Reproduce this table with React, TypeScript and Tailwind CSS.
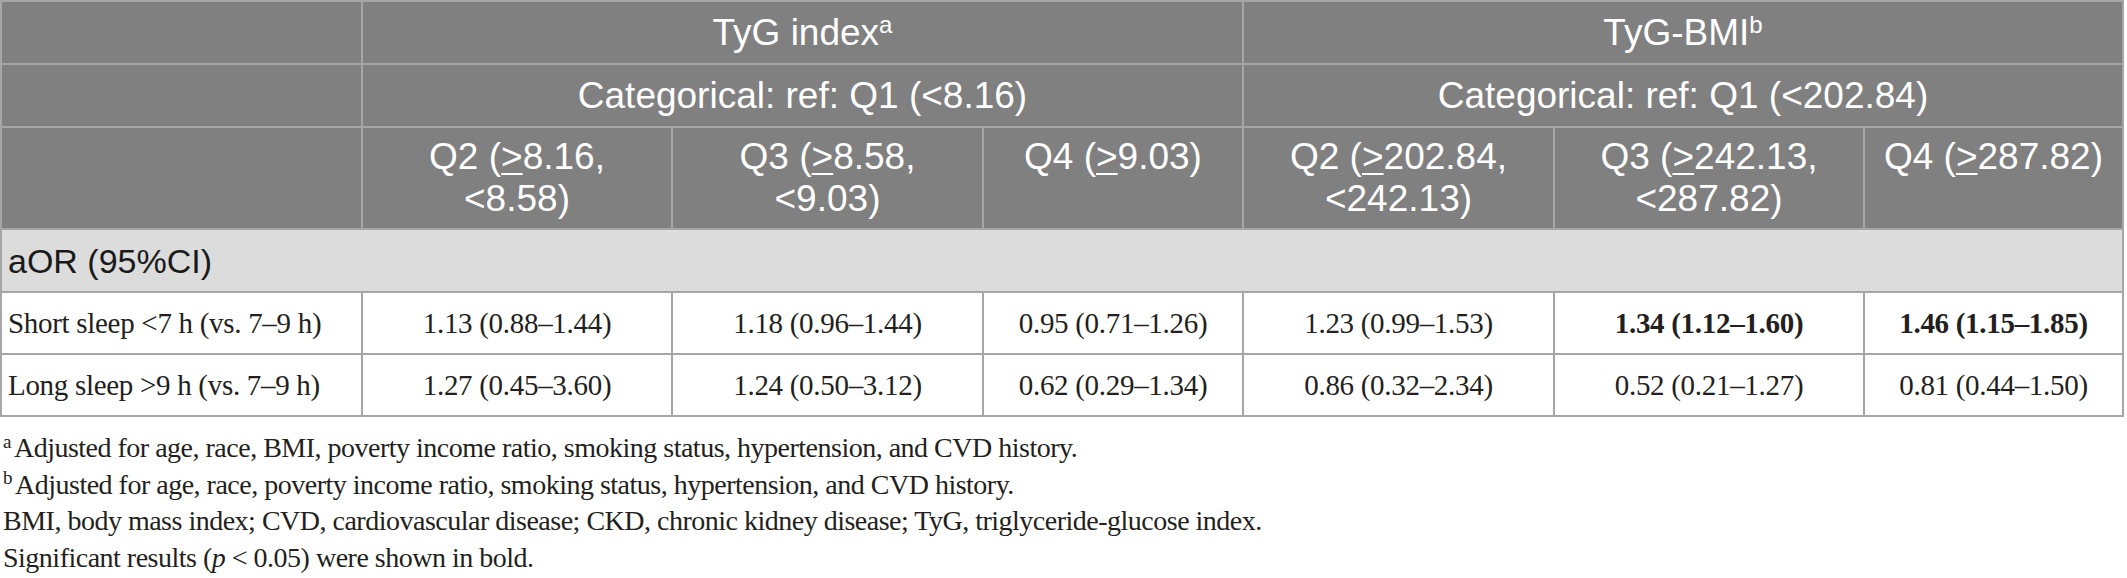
import React from "react";

const GE = () => (
  <span className="underline decoration-[2px] underline-offset-[4px]">&gt;</span>
);

function HeadCell({
  children,
  className = "",
}: {
  children?: React.ReactNode;
  className?: string;
}) {
  return (
    <div
      className={
        "bg-[#808080] text-white font-['Liberation_Sans',Arial,sans-serif] text-[37px] leading-[42px] text-center " +
        className
      }
    >
      {children}
    </div>
  );
}

function DataCell({
  children,
  left = false,
  bold = false,
}: {
  children?: React.ReactNode;
  left?: boolean;
  bold?: boolean;
}) {
  return (
    <div
      className={
        (left ? "justify-start pl-[6px] " : "justify-center ") +
        (bold ? "font-bold " : "font-normal ") +
        "flex items-center bg-white font-['Liberation_Serif',serif] text-[29px] tracking-[-0.3px] leading-[34px] text-[#231f20]"
      }
    >
      {children}
    </div>
  );
}

export default function App() {
  return (
    <div className="w-[2127px] h-[578px] bg-white overflow-hidden">
      <div className="grid w-[2124px] grid-cols-[359px_308px_309px_258px_309px_308px_257px] grid-rows-[61px_61px_100px_61px_60px_60px] gap-[2px] border-2 border-[#a6a6a6] bg-[#a6a6a6]">
        {/* Row 1 */}
        <HeadCell />
        <HeadCell className="col-span-3 flex items-center justify-center">
          <span>
            TyG index<sup className="text-[24px]">a</sup>
          </span>
        </HeadCell>
        <HeadCell className="col-span-3 flex items-center justify-center">
          <span>
            TyG-BMI<sup className="text-[24px]">b</sup>
          </span>
        </HeadCell>

        {/* Row 2 */}
        <HeadCell />
        <HeadCell className="col-span-3 flex items-center justify-center">
          Categorical: ref: Q1 (&lt;8.16)
        </HeadCell>
        <HeadCell className="col-span-3 flex items-center justify-center">
          Categorical: ref: Q1 (&lt;202.84)
        </HeadCell>

        {/* Row 3 */}
        <HeadCell />
        <HeadCell className="pt-[8px]">
          Q2 (<GE />
          8.16,
          <br />
          &lt;8.58)
        </HeadCell>
        <HeadCell className="pt-[8px]">
          Q3 (<GE />
          8.58,
          <br />
          &lt;9.03)
        </HeadCell>
        <HeadCell className="pt-[8px]">
          Q4 (<GE />
          9.03)
        </HeadCell>
        <HeadCell className="pt-[8px]">
          Q2 (<GE />
          202.84,
          <br />
          &lt;242.13)
        </HeadCell>
        <HeadCell className="pt-[8px]">
          Q3 (<GE />
          242.13,
          <br />
          &lt;287.82)
        </HeadCell>
        <HeadCell className="pt-[8px]">
          Q4 (<GE />
          287.82)
        </HeadCell>

        {/* aOR row */}
        <div className="col-span-7 flex items-center bg-[#dcdcdc] pl-[6px] font-['Liberation_Sans',Arial,sans-serif] text-[34px] leading-[42px] text-[#1a1a1a]">
          aOR (95%CI)
        </div>

        {/* Short sleep */}
        <DataCell left>Short sleep &lt;7 h (vs. 7–9 h)</DataCell>
        <DataCell>1.13 (0.88–1.44)</DataCell>
        <DataCell>1.18 (0.96–1.44)</DataCell>
        <DataCell>0.95 (0.71–1.26)</DataCell>
        <DataCell>1.23 (0.99–1.53)</DataCell>
        <DataCell bold>1.34 (1.12–1.60)</DataCell>
        <DataCell bold>1.46 (1.15–1.85)</DataCell>

        {/* Long sleep */}
        <DataCell left>Long sleep &gt;9 h (vs. 7–9 h)</DataCell>
        <DataCell>1.27 (0.45–3.60)</DataCell>
        <DataCell>1.24 (0.50–3.12)</DataCell>
        <DataCell>0.62 (0.29–1.34)</DataCell>
        <DataCell>0.86 (0.32–2.34)</DataCell>
        <DataCell>0.52 (0.21–1.27)</DataCell>
        <DataCell>0.81 (0.44–1.50)</DataCell>
      </div>

      <div className="mt-[13px] pl-[3px] font-['Liberation_Serif',serif] text-[28px] tracking-[-0.5px] leading-[36.5px] text-[#231f20]">
        <p>
          <sup className="text-[19px]">a</sup>
          <span className="ml-[3px]">
            Adjusted for age, race, BMI, poverty income ratio, smoking status, hypertension, and CVD history.
          </span>
        </p>
        <p>
          <sup className="text-[19px]">b</sup>
          <span className="ml-[3px]">
            Adjusted for age, race, poverty income ratio, smoking status, hypertension, and CVD history.
          </span>
        </p>
        <p>
          BMI, body mass index; CVD, cardiovascular disease; CKD, chronic kidney disease; TyG, triglyceride-glucose index.
        </p>
        <p>
          Significant results (<i>p</i> &lt; 0.05) were shown in bold.
        </p>
      </div>
    </div>
  );
}
